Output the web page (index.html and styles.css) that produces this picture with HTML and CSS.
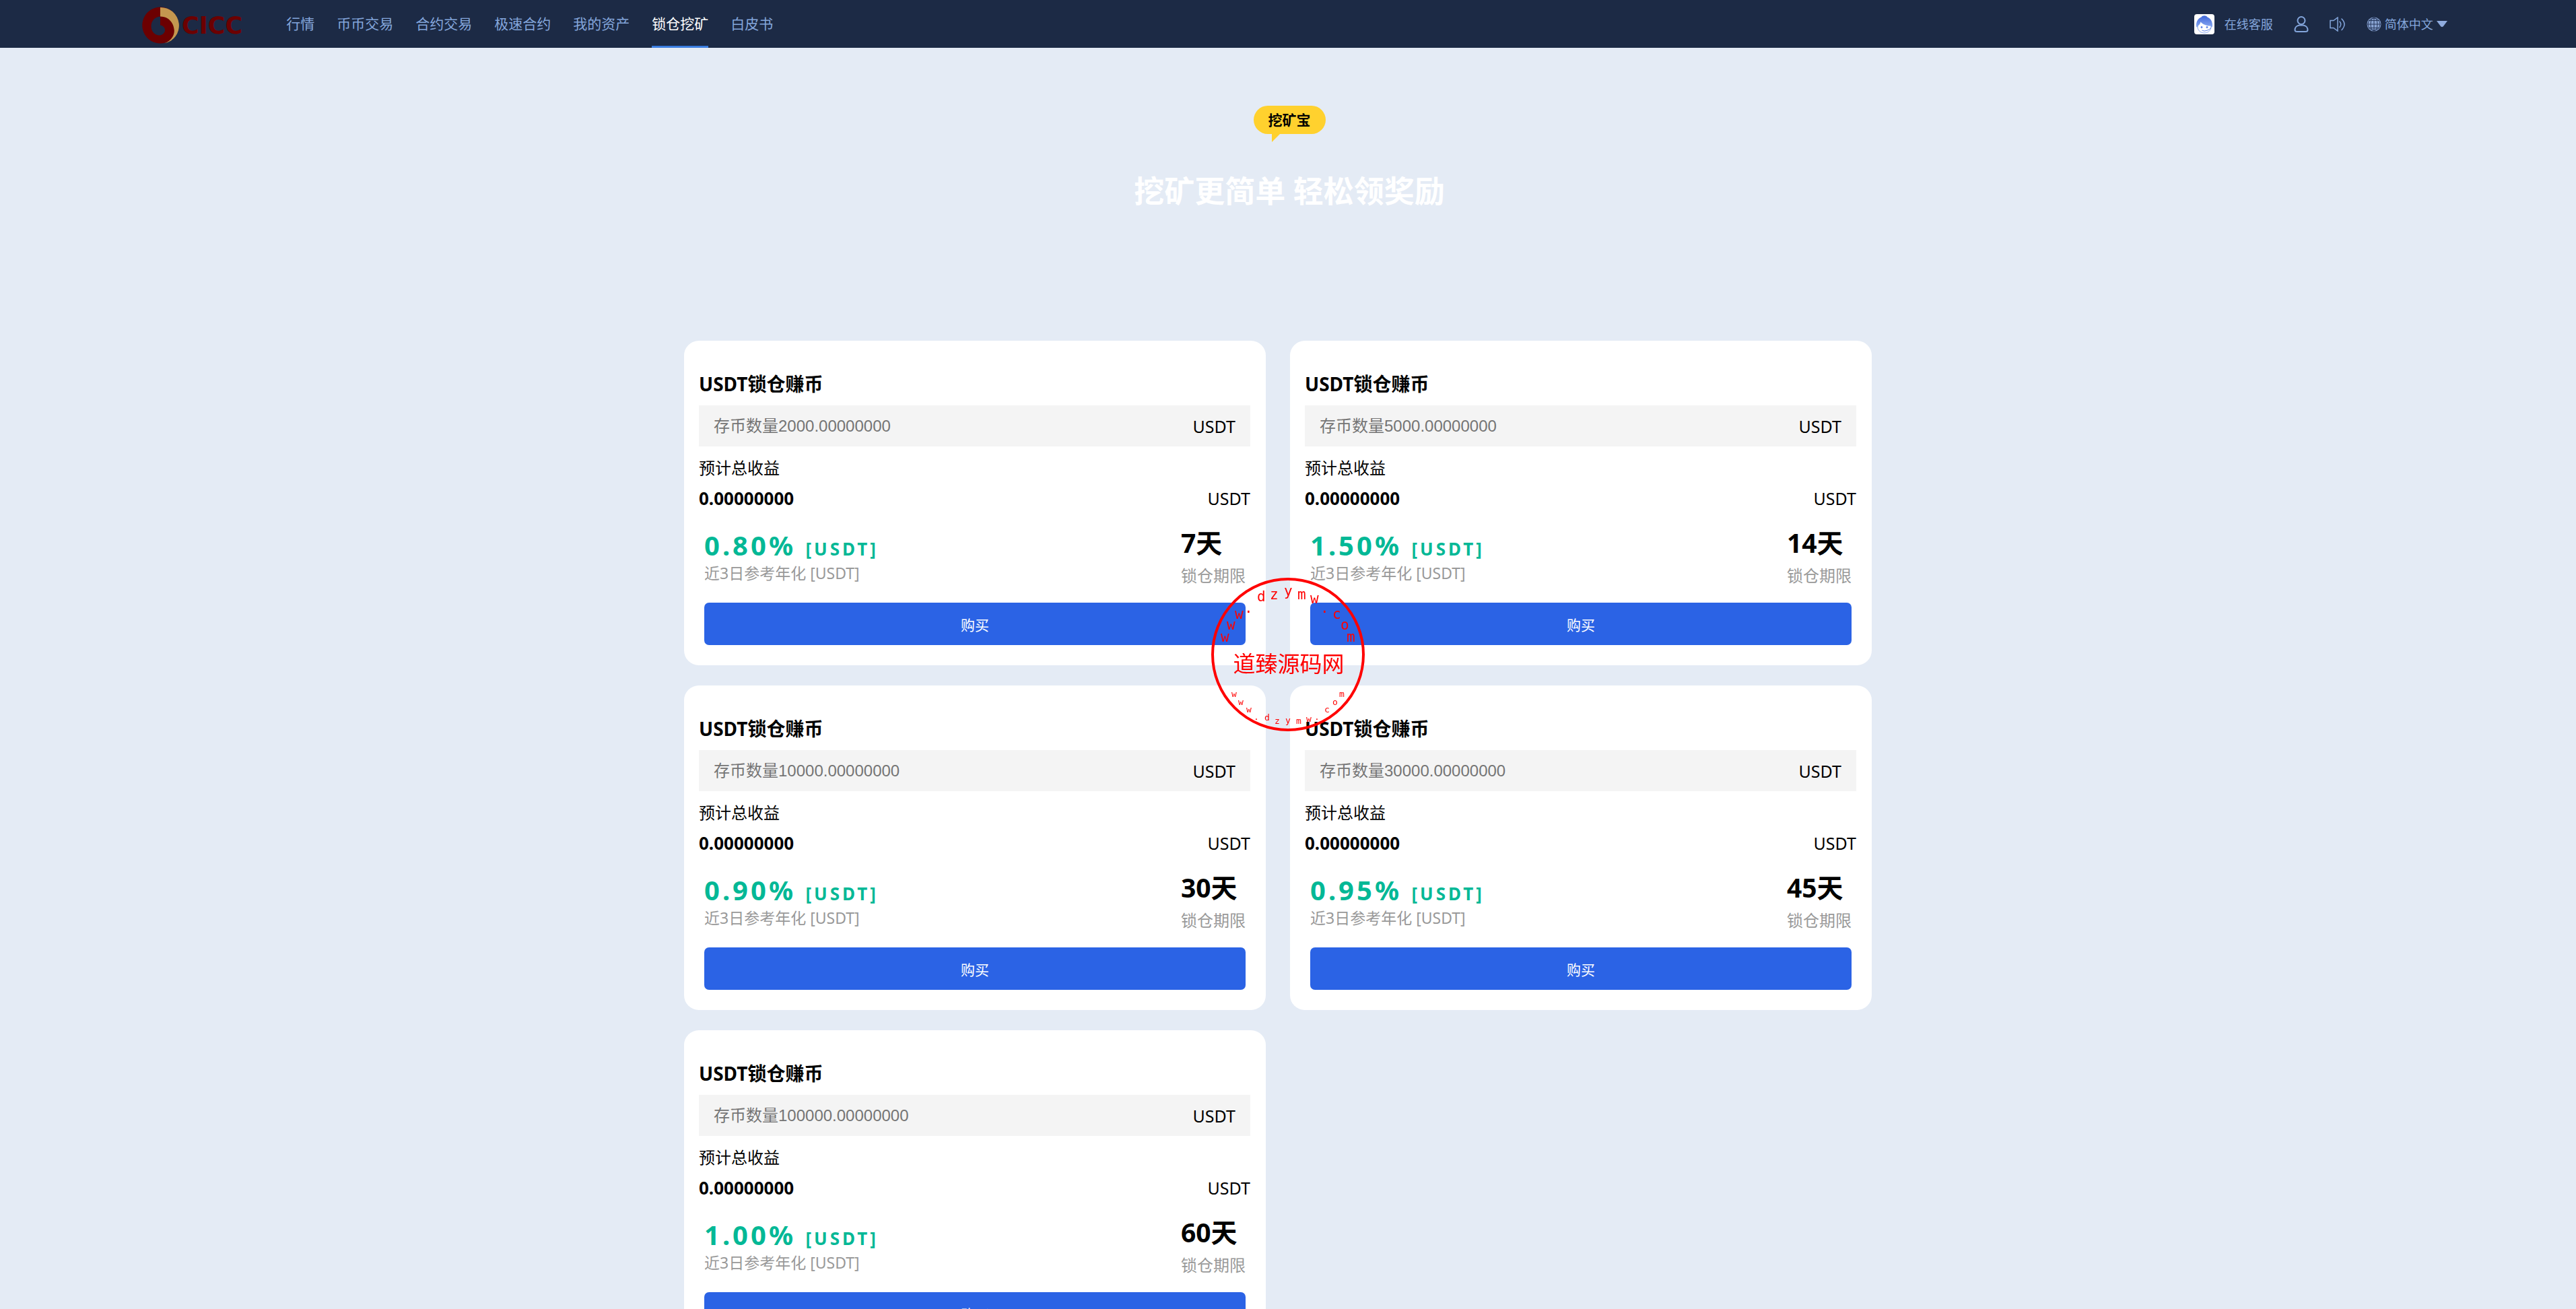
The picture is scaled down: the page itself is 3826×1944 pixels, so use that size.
FILE: index.html
```html
<!DOCTYPE html>
<html lang="zh-CN">
<head>
<meta charset="utf-8">
<meta name="viewport" content="width=device-width, initial-scale=1">
<title>锁仓挖矿</title>
<link rel="stylesheet" href="styles.css">
</head>
<body>
<header class="header">
  <a class="logo" href="#" aria-label="CICC">
    <svg width="152" height="56" viewBox="0 0 152 56">
      <path d="M27.500 0.500A27 27 0 1 1 27 0.500Z" fill="#6c0001"/>
      <path d="M27 1A27 27 0 0 1 33 54.500C45 50 49 40 47.500 33C46 22 38 14.500 27 14.500Z" fill="#c4974f"/>
      <path d="M27 14.500C18 15 13.500 22 13.500 29C13.500 37 19 42.500 26 42.500C31 42 34.500 38 34 34C33.500 30 30 27.500 27 27.500Z" fill="#1c2a45"/>
      <text class="logo-text" x="59" y="40">CICC</text>
    </svg>
  </a>
  <nav class="nav">
    <a href="#">行情</a>
    <a href="#">币币交易</a>
    <a href="#">合约交易</a>
    <a href="#">极速合约</a>
    <a href="#">我的资产</a>
    <a href="#" class="active" aria-current="page">锁仓挖矿</a>
    <a href="#">白皮书</a>
  </nav>
  <div class="tools">
    <a class="service" href="#">
      <svg width="30" height="30" viewBox="0 0 30 30">
        <defs><linearGradient id="hair" x1="0" y1="0" x2="0" y2="1"><stop offset="0" stop-color="#3f66d8"/><stop offset="1" stop-color="#88a9f3"/></linearGradient></defs>
        <rect width="30" height="30" rx="4" fill="#fff"/>
        <path d="M5 16.500V20C6 25 10 28 15 28C20 28 24 25 25 20V16.500" fill="none" stroke="#86a5ef" stroke-width="1"/>
        <path d="M3 18C2.500 11 6 6 10.500 4.500C12 1.500 18 1.500 19.500 4.500C24 6 27.500 11 27 18C26.500 20 25 20 24.500 17.500C19 17.500 13 15.500 9.500 11.500C9 14 7.500 16 5.500 17.500C5 20 3.500 20 3 18Z" fill="url(#hair)"/>
        <circle cx="11" cy="19.500" r="1.400" fill="#5c82e4"/><circle cx="19" cy="19.500" r="1.400" fill="#5c82e4"/>
        <path d="M11.500 24Q15 26 18 24.500M18 24.500Q23 23.500 25 20" fill="none" stroke="#5c82e4" stroke-width="1"/>
      </svg>
      <span>在线客服</span>
    </a>
    <button class="icon-button" type="button" aria-label="账户">
      <svg width="22" height="24" viewBox="0 0 22 24" fill="none" stroke="currentColor" stroke-width="2">
        <circle cx="11" cy="6.500" r="5.500"/>
        <path d="M8 13.500H14C18 14 20.500 17 20.500 20.500C20.500 22.500 19 23 17 23H5C3 23 1.500 22.500 1.500 20.500C1.500 17 4 14 8 13.500Z"/>
      </svg>
    </button>
    <button class="icon-button" type="button" aria-label="公告">
      <svg width="24" height="22" viewBox="0 0 24 22" fill="none" stroke="currentColor" stroke-width="1.500">
        <path d="M1 5.500H6L12 1V21L6 16.500H1Z"/>
        <path d="M15 7Q18.500 11 15 15.500M18 3Q26 11 18 19.500" stroke-linecap="round"/>
      </svg>
    </button>
    <label class="language">
      <svg width="22" height="22" viewBox="0 0 22 22">
        <circle cx="11" cy="11" r="10.500" fill="#88a3d2"/>
        <g fill="none" stroke="#26375a" stroke-width="1"><circle cx="11" cy="11" r="9"/><ellipse cx="11" cy="11" rx="5" ry="10"/><path d="M11 1V21M1 11H21M3 5.500H19M3 16.500H19"/></g>
      </svg>
      <select aria-label="语言"><option>简体中文</option><option>English</option></select>
      <svg width="16" height="10" viewBox="0 0 16 10"><path d="M0 0H16L10 8Q8 10 6 8Z" fill="#8fabde"/></svg>
    </label>
  </div>
</header>

<main>
  <section class="hero">
    <span class="badge">挖矿宝</span>
    <h1>挖矿更简单 轻松领奖励</h1>
  </section>

  <section class="cards">
    <form class="card">
      <h2>USDT锁仓赚币</h2>
      <label class="field"><input type="text" placeholder="存币数量2000.00000000"><span class="unit">USDT</span></label>
      <p class="label">预计总收益</p>
      <p class="income"><strong>0.00000000</strong><span class="unit">USDT</span></p>
      <div class="stats">
        <div class="rate"><p class="percent">0.80% <small>[USDT]</small></p><p class="note">近3日参考年化 [USDT]</p></div>
        <div class="term"><p class="days">7天</p><p>锁仓期限</p></div>
      </div>
      <div class="action"><button class="buy" type="button">购买</button></div>
    </form>
    <form class="card">
      <h2>USDT锁仓赚币</h2>
      <label class="field"><input type="text" placeholder="存币数量5000.00000000"><span class="unit">USDT</span></label>
      <p class="label">预计总收益</p>
      <p class="income"><strong>0.00000000</strong><span class="unit">USDT</span></p>
      <div class="stats">
        <div class="rate"><p class="percent">1.50% <small>[USDT]</small></p><p class="note">近3日参考年化 [USDT]</p></div>
        <div class="term"><p class="days">14天</p><p>锁仓期限</p></div>
      </div>
      <div class="action"><button class="buy" type="button">购买</button></div>
    </form>
    <form class="card">
      <h2>USDT锁仓赚币</h2>
      <label class="field"><input type="text" placeholder="存币数量10000.00000000"><span class="unit">USDT</span></label>
      <p class="label">预计总收益</p>
      <p class="income"><strong>0.00000000</strong><span class="unit">USDT</span></p>
      <div class="stats">
        <div class="rate"><p class="percent">0.90% <small>[USDT]</small></p><p class="note">近3日参考年化 [USDT]</p></div>
        <div class="term"><p class="days">30天</p><p>锁仓期限</p></div>
      </div>
      <div class="action"><button class="buy" type="button">购买</button></div>
    </form>
    <form class="card">
      <h2>USDT锁仓赚币</h2>
      <label class="field"><input type="text" placeholder="存币数量30000.00000000"><span class="unit">USDT</span></label>
      <p class="label">预计总收益</p>
      <p class="income"><strong>0.00000000</strong><span class="unit">USDT</span></p>
      <div class="stats">
        <div class="rate"><p class="percent">0.95% <small>[USDT]</small></p><p class="note">近3日参考年化 [USDT]</p></div>
        <div class="term"><p class="days">45天</p><p>锁仓期限</p></div>
      </div>
      <div class="action"><button class="buy" type="button">购买</button></div>
    </form>
    <form class="card">
      <h2>USDT锁仓赚币</h2>
      <label class="field"><input type="text" placeholder="存币数量100000.00000000"><span class="unit">USDT</span></label>
      <p class="label">预计总收益</p>
      <p class="income"><strong>0.00000000</strong><span class="unit">USDT</span></p>
      <div class="stats">
        <div class="rate"><p class="percent">1.00% <small>[USDT]</small></p><p class="note">近3日参考年化 [USDT]</p></div>
        <div class="term"><p class="days">60天</p><p>锁仓期限</p></div>
      </div>
      <div class="action"><button class="buy" type="button">购买</button></div>
    </form>
  </section>
</main>

<svg class="stamp" width="270" height="270" viewBox="-2 -3 270 270">
  <circle cx="133" cy="132" r="112" fill="none" stroke="#f00" stroke-width="4"/>
  <text class="stamp-top" x="33 42 54 68 87 106 127 147 166 181 199 211 220" y="113 95 79 70 53 50 45 50 56 70 79 95 113">www.dzymw.com</text>
  <text class="stamp-name" x="134" y="158" text-anchor="middle">道臻源码网</text>
  <text class="stamp-bottom" x="49 59 71 82 98 113 129 145 160 172 187 199 209" y="195 207 218 229 230 235 234 235 232 229 218 207 195">www.dzymw.com</text>
</svg>
</body>
</html>
```

FILE: styles.css
```css
* {
  box-sizing: border-box;
  margin: 0;
  padding: 0;
}

html {
  scrollbar-width: none;
}

body {
  height: 100vh;
  overflow-y: auto;
  scrollbar-width: none;
  background: #e4ebf5;
  color: #000;
  font-family: "Noto Sans", "Noto Sans CJK SC", sans-serif;
  font-size: 24px;
  line-height: 36px;
}

a {
  color: inherit;
  text-decoration: none;
}

button,
select {
  border: 0;
  background: none;
  color: inherit;
  font-family: inherit;
  cursor: pointer;
}

svg {
  display: block;
  flex: none;
}

.header {
  display: flex;
  align-items: stretch;
  height: 71px;
  padding: 0 5%;
  background: #1c2a45;
  color: #84a6dc;
}

.logo {
  display: flex;
  align-items: center;
  padding: 4px 62px 0 20px;
}

.logo-text {
  fill: #6c0001;
  font-family: "DejaVu Sans", sans-serif;
  font-size: 35px;
  font-weight: bold;
}

.nav {
  display: flex;
  gap: 33px;
  font-family: "Noto Sans CJK SC", sans-serif;
  font-size: 21px;
}

.nav a {
  display: flex;
  align-items: center;
  border-bottom: 3px solid transparent;
}

.nav .active {
  border-bottom-color: #3a7de0;
  color: #fff;
}

.tools {
  display: flex;
  align-items: center;
  gap: 31px;
  margin-left: auto;
  font-size: 18px;
}

.service {
  display: flex;
  align-items: center;
  gap: 15px;
}

.language {
  display: flex;
  align-items: center;
  gap: 5px;
}

.language select {
  appearance: none;
  font-size: 18px;
}

.hero {
  display: flex;
  flex-direction: column;
  align-items: center;
  gap: 55px;
  padding: 86px 20px 192px 24px;
}

.badge {
  position: relative;
  padding: 0 22px;
  border-radius: 21px;
  background: #ffd12e;
  font-size: 21px;
  font-weight: bold;
  line-height: 42px;
}

.badge::after {
  position: absolute;
  top: 100%;
  left: 27px;
  border-top: 12px solid #ffd12e;
  border-right: 12px solid transparent;
  content: "";
}

.hero h1 {
  color: #fff;
  font-size: 45px;
  line-height: 60px;
}

.cards {
  display: grid;
  grid-template-columns: 1fr 1fr;
  gap: 30px 36px;
  max-width: 1794px;
  margin: 0 auto;
  padding: 0 30px 30px 0;
}

.card {
  padding: 49px 23px 30px 22px;
  border-radius: 22px;
  background: #fff;
}

.card h2 {
  font-size: 28px;
  line-height: 30px;
}

.field {
  display: flex;
  align-items: center;
  height: 61px;
  margin-top: 17px;
  padding: 0 22px;
  background: #f4f4f4;
}

.field input {
  flex: 1;
  min-width: 0;
  border: 0;
  background: none;
  font-family: "Liberation Sans", "Noto Sans CJK SC", sans-serif;
  font-size: 24px;
}

.field input::placeholder {
  color: #757575;
}

.unit {
  font-size: 25px;
}

.label {
  margin-top: 14px;
}

.income {
  display: flex;
  justify-content: space-between;
  margin-top: 9px;
}

.income strong {
  font-size: 26px;
}

.stats {
  display: flex;
  justify-content: space-between;
  margin-top: 25px;
  padding: 0 7px 0 8px;
  color: #999;
}

.rate {
  padding-top: 4px;
}

.percent {
  color: #03b896;
  font-size: 40px;
  font-weight: bold;
  letter-spacing: 4px;
  line-height: 46px;
}

.percent small {
  font-size: 26px;
  line-height: 1;
}

.note {
  font-size: 23px;
}

.days {
  margin-bottom: 8px;
  color: #000;
  font-size: 39px;
  font-weight: bold;
  line-height: 46px;
}

.action {
  padding: 22px 7px 0 8px;
}

.buy {
  display: block;
  width: 100%;
  height: 63px;
  border-radius: 7px;
  background: #2b63e5;
  color: #fff;
  font-size: 21px;
}

.stamp {
  position: fixed;
  top: 50%;
  left: 50%;
  margin: -135px 0 0 -135px;
  fill: #f00;
  pointer-events: none;
}

.stamp-top {
  font-family: "DejaVu Sans Mono", monospace;
  font-size: 21px;
}

.stamp-name {
  font-family: "Noto Sans CJK SC", sans-serif;
  font-size: 33px;
}

.stamp-bottom {
  font-family: "DejaVu Sans Mono", monospace;
  font-size: 13px;
}
```
